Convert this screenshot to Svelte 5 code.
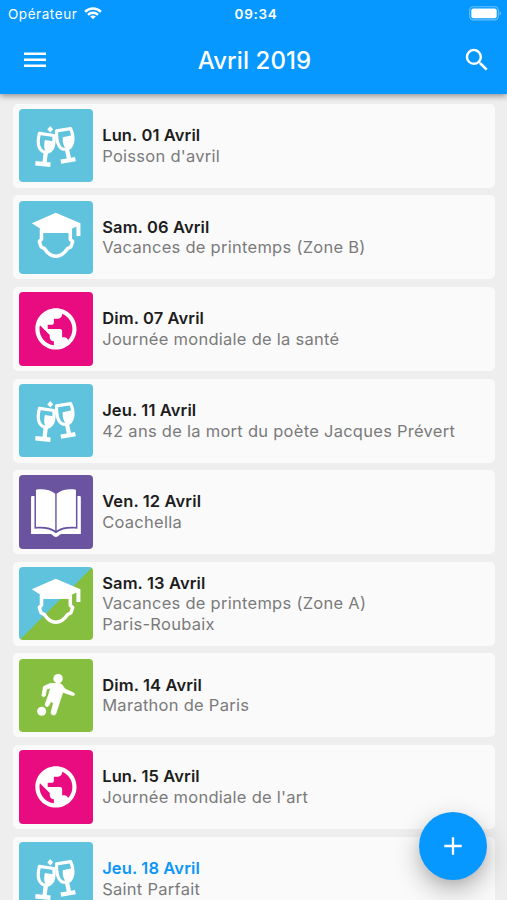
<script>
  const days = [
    { date: 'Lun. 01 Avril', lines: ["Poisson d'avril"], kind: 'cheers', tone: 'sky' },
    { date: 'Sam. 06 Avril', lines: ['Vacances de printemps (Zone B)'], kind: 'school', tone: 'sky' },
    { date: 'Dim. 07 Avril', lines: ['Journée mondiale de la santé'], kind: 'globe', tone: 'pink' },
    { date: 'Jeu. 11 Avril', lines: ['42 ans de la mort du poète Jacques Prévert'], kind: 'cheers', tone: 'sky' },
    { date: 'Ven. 12 Avril', lines: ['Coachella'], kind: 'book', tone: 'violet' },
    { date: 'Sam. 13 Avril', lines: ['Vacances de printemps (Zone A)', 'Paris-Roubaix'], kind: 'school', tone: 'split' },
    { date: 'Dim. 14 Avril', lines: ['Marathon de Paris'], kind: 'sport', tone: 'green' },
    { date: 'Lun. 15 Avril', lines: ["Journée mondiale de l'art"], kind: 'globe', tone: 'pink' },
    { date: 'Jeu. 18 Avril', lines: ['Saint Parfait'], kind: 'cheers', tone: 'sky', today: true }
  ];
</script>

<div class="screen">
  <header>
    <div class="status">
      <div class="carrier">
        <span>Opérateur</span>
        <svg width="18" height="13" viewBox="0 0 18 13" fill="none" stroke="#fff" stroke-width="2.4">
          <path d="M1.1 4.8C5.5.4 12.5.4 16.9 4.8" />
          <path d="M4 7.8c2.8-2.7 7.2-2.7 10 0" />
          <path d="M9 12.3 6.2 9.6c1.6-1.4 4-1.4 5.6 0z" fill="#fff" stroke="none" />
        </svg>
      </div>
      <span class="time">09:34</span>
      <svg class="battery" width="33" height="15" viewBox="0 0 33 15">
        <rect x=".7" y=".7" width="28.6" height="13.2" rx="3.6" fill="none" stroke="#fff" stroke-opacity=".4" stroke-width="1.1" />
        <rect x="2.3" y="2.4" width="25.4" height="9.8" rx="2" fill="#fff" />
        <path d="M30.6 5.2c1.8.8 1.8 3.4 0 4.2z" fill="#fff" opacity=".45" />
      </svg>
    </div>
    <div class="toolbar">
      <svg width="24" height="18" viewBox="0 0 24 18" fill="#fff">
        <path d="M1 1.5h22v2.6H1zM1 7.5h22v2.6H1zM1 13.5h22v2.6H1z" />
      </svg>
      <h1>Avril 2019</h1>
      <svg width="30" height="30" viewBox="0 0 24 24" fill="#fff">
        <path d="M15.5 14h-.79l-.28-.27A6.47 6.47 0 0 0 16 9.5 6.5 6.5 0 1 0 9.5 16c1.61 0 3.09-.59 4.23-1.57l.27.28v.79l5 4.99L20.49 19l-4.99-5zm-6 0C7.01 14 5 11.99 5 9.5S7.01 5 9.5 5 14 7.01 14 9.5 11.99 14 9.5 14z" />
      </svg>
    </div>
  </header>

  <main>
    {#each days as day}
      <article>
        <div class="tile {day.tone}">
          <svg viewBox="0 0 73.4 73.4" fill="#fff">
            {#if day.kind === 'cheers'}
              <g fill="none" stroke="#fff" stroke-width="3.2" stroke-linejoin="round">
                <path d="M20.4 24.2 34.6 26.4C35.6 35 34.4 42 27.6 43.2 20.5 43.2 17.2 36 20.4 24.2z" />
                <path d="M37.4 21.8 51.4 19.6C55.6 29 54 37.8 47.6 40.2 40.6 41.1 37 35 37.4 21.8z" />
              </g>
              <path d="M25.8 31 35.5 32.3C35.5 40 32.5 43.6 27.3 43.2 24.8 40.5 24.6 36 25.8 31z" />
              <path d="M43.5 28.2 53.8 25.9C55.5 33 53 38.8 47.5 40.5 44.8 38 43.2 34 43.5 28.2z" />
              <path d="M24.6 42.5h4.3l-1.2 10.4 3.9.4-.5 4.4-15-1.5.4-4.4 6.9.7zM45.6 40l4.1-.6 2.1 9.1 4-.7.8 4.2-14.6 2.6-.7-4.2 6.3-1.1z" />
              <path d="m31 17 3 3.2-2.7 3.3-3.1-3.1z" />
            {:else if day.kind === 'school'}
              <path d="M12.8 22.2 36.6 11.8 61.2 22.2V34.8h-4V25.5l-4.6 2.2v4.2H20.9V27.5z" />
              <path d="M22.4 28v10.2l-2.2 2.1 1.9 5.5 3.2 1.5C28.8 52.8 32.5 55 36.7 55s8-2.2 11.7-7.7l3.2-1.5 1.9-5.5-2.4-2.1V28" fill="none" stroke="#fff" stroke-width="3.5" stroke-linejoin="round" />
            {:else if day.kind === 'globe'}
              <path transform="translate(12.2 12.2) scale(2.05)" d="M12 2C6.48 2 2 6.48 2 12s4.48 10 10 10 10-4.48 10-10S17.52 2 12 2zm-1 17.93c-3.95-.49-7-3.85-7-7.93 0-.62.08-1.21.21-1.79L9 15v1c0 1.1.9 2 2 2v1.93zm6.9-2.54c-.26-.81-1-1.39-1.9-1.39h-1v-3c0-.55-.45-1-1-1H8v-2h2c.55 0 1-.45 1-1V7h2c1.1 0 2-.9 2-2v-.41c2.93 1.19 5 4.06 5 7.41 0 2.08-.8 3.97-2.1 5.39z" />
            {:else if day.kind === 'book'}
              <path d="M13.2 21H60.4a1.2 1.2 0 0 1 1.2 1.2V58.8H42.2c-2.2 0-2.6 2.9-5.4 2.9s-3.2-2.9-5.4-2.9H12V22.2A1.2 1.2 0 0 1 13.2 21z" />
              <path d="M15.4 13.2c8.6-1 15.6-.2 21.4 4.6C42.6 13 49.6 12.2 58.2 13.2V53.6c-8.2-.9-15.5-.1-21.4 4.4C30.9 53.5 23.6 52.7 15.4 53.6z" fill="#6a549f" />
              <path d="M16.9 14.6c7.6-.9 14.2-.1 19.2 4.1V55.2c-5.6-3.5-12-4.1-19.2-3.3zM56.7 14.6c-7.6-.9-14.2-.1-19.2 4.1V55.2c5.6-3.5 12-4.1 19.2-3.3z" />
            {:else}
              <circle cx="38.9" cy="19.6" r="4.7" />
              <circle cx="22.6" cy="52.1" r="4.5" />
              <path stroke="#fff" stroke-width=".9" stroke-linejoin="round" d="M31 24.5h8.5c2 0 3.5 1 4.5 2.8l1.6 2.5 8.7 4c2 1.2.8 3-1.2 2.4L43.6 33l-2.4 7.2-4.5 14c-.9 2.5-5.2 1.8-4.6-.9l2.3-9.6-2.7-1.4-2.2 4.3c-.8 1.3-4.6 1.1-3-2.6l3.4-9.2 1.6-6.2-4.1 1.5-1.3 6.6c-.6 1.6-3.5 1-3.1-1.2l1.5-8.1z" />
            {/if}
          </svg>
        </div>
        <div class="info">
          <h2 class:today={day.today}>{day.date}</h2>
          {#each day.lines as line}<p>{line}</p>{/each}
        </div>
      </article>
    {/each}
  </main>

  <button aria-label="Ajouter">
    <svg width="18" height="18" viewBox="0 0 18 18" fill="none" stroke="#fff" stroke-width="2.3">
      <path d="M9 .3v17.4M.3 9h17.4" />
    </svg>
  </button>
</div>

<style>
  :global(body) { overflow: hidden; }
  .screen {
    position: relative;
    width: 507px;
    height: 900px;
    overflow: hidden;
    display: flex;
    flex-direction: column;
    background: #eee;
    font-family: Inter, "Liberation Sans", sans-serif;
  }
  header {
    position: relative;
    z-index: 1;
    flex: 0 0 94px;
    background: #0698ff;
    color: #fff;
    box-shadow: 0 2px 6px rgba(0, 0, 0, .4);
  }
  .status {
    display: grid;
    grid-template-columns: 1fr auto 1fr;
    align-items: center;
    height: 27px;
    padding: 0 5px 0 8px;
    font-size: 13.5px;
  }
  .carrier { display: flex; align-items: center; gap: 7px; letter-spacing: .55px; }
  .time { padding-left: 2px; font-weight: 600; letter-spacing: .7px; }
  .battery { justify-self: end; }
  .toolbar {
    display: flex;
    align-items: center;
    justify-content: space-between;
    height: 66px;
    padding: 0 15px 0 23px;
  }
  h1 { margin: 0; font-size: 24px; font-weight: 500; letter-spacing: .1px; }
  main { display: flex; flex-direction: column; gap: 7.6px; padding: 9.8px 12px 0 13px; }
  article {
    flex: 0 0 84px;
    display: flex;
    align-items: center;
    gap: 9.5px;
    box-sizing: border-box;
    padding: 0 6px;
    border-radius: 5px;
    background: #fafafa;
  }
  .tile { flex: none; width: 73.7px; height: 73.4px; border-radius: 4px; overflow: hidden; }
  .tile svg { display: block; }
  .sky { background: #5fc3de; }
  .pink { background: #e90c80; }
  .violet { background: #6a549f; }
  .green { background: #86be40; }
  .split { background: linear-gradient(135deg, #5fc3de 50%, #86be40 50%); }
  h2, p { margin: 0; font-size: 16.5px; line-height: 20.8px; white-space: nowrap; }
  h2 { font-weight: 600; color: #1d1d1d; letter-spacing: .12px; }
  h2.today { color: #0d96fa; }
  p { color: #7b7b7b; letter-spacing: .27px; }
  button {
    position: absolute;
    left: 418.7px;
    top: 811.7px;
    z-index: 2;
    display: grid;
    place-items: center;
    width: 68.6px;
    height: 68.6px;
    padding: 0;
    border: 0;
    border-radius: 50%;
    background: #0698ff;
    box-shadow: 0 10px 26px rgba(0, 0, 0, .28), 0 4px 10px rgba(0, 0, 0, .06);
  }
</style>
